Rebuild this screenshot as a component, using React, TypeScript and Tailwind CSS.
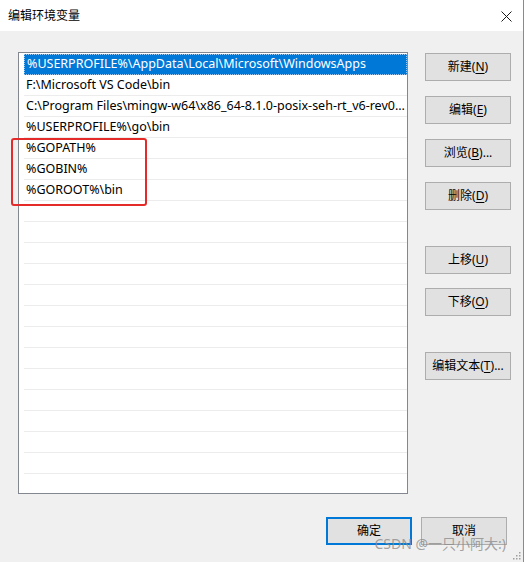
import React from "react";

const FONT = '"Noto Sans", "Noto Sans CJK SC", sans-serif';

const PATHS = [
  "%USERPROFILE%\\AppData\\Local\\Microsoft\\WindowsApps",
  "F:\\Microsoft VS Code\\bin",
  "C:\\Program Files\\mingw-w64\\x86_64-8.1.0-posix-seh-rt_v6-rev0\\mingw64\\bin",
  "%USERPROFILE%\\go\\bin",
  "%GOPATH%",
  "%GOBIN%",
  "%GOROOT%\\bin",
];

const EMPTY_ROWS = 14;

function WinButton({ label, hotkey, suffix = "", className = "" }: { label: string; hotkey?: string; suffix?: string; className?: string }) {
  return (
    <button
      className={`flex h-[28px] w-[86px] items-center justify-center border border-[#adadad] bg-[#e1e1e1] text-[12px] text-black ${className}`}
    >
      {label}
      {hotkey && (
        <>
          (<span className="underline underline-offset-2">{hotkey}</span>)
        </>
      )}
      {suffix}
    </button>
  );
}

export default function App() {
  return (
    <div className="flex h-[562px] w-[526px] bg-white" style={{ fontFamily: FONT }}>
      <div className="relative flex h-full w-[524px] flex-col border-r border-[#8a8a8a]">
        {/* title bar */}
        <div className="flex h-[31px] shrink-0 items-center justify-between bg-white pl-[8px] pr-[11px]">
          <span className="text-[12px] text-black">编辑环境变量</span>
          <svg width="11" height="11" viewBox="0 0 11 11" className="mt-[1px]">
            <path d="M0.5 0.5 L10.5 10.5 M10.5 0.5 L0.5 10.5" stroke="#1a1a1a" strokeWidth="1" />
          </svg>
        </div>

        {/* body */}
        <div className="flex flex-1 flex-col bg-[#f0f0f0] pl-[18px] pt-[21px]">
          <div className="flex">
            <div className="h-[442px] w-[390px] overflow-hidden border border-[#828790] bg-white pl-[5px] pt-[1px]">
              {PATHS.map((p, i) => (
                <div
                  key={p}
                  className={`flex h-[21px] items-center border-b px-[2px] text-[12.5px] ${
                    i === 0
                      ? "border border-dotted border-[#9cc8f0] bg-[#0078d7] text-white"
                      : "border-[#ececec] text-black"
                  }`}
                >
                  <span className="truncate">{p}</span>
                </div>
              ))}
              {Array.from({ length: EMPTY_ROWS }).map((_, i) => (
                <div key={i} className="h-[21px] border-b border-[#ececec]" />
              ))}
            </div>

            <div className="ml-[17px] flex flex-col pt-[1px]">
              <WinButton label="新建" hotkey="N" />
              <WinButton label="编辑" hotkey="E" className="mt-[15px]" />
              <WinButton label="浏览" hotkey="B" suffix="..." className="mt-[15px]" />
              <WinButton label="删除" hotkey="D" className="mt-[15px]" />
              <WinButton label="上移" hotkey="U" className="mt-[36px]" />
              <WinButton label="下移" hotkey="O" className="mt-[14px]" />
              <WinButton label="编辑文本" hotkey="T" suffix="..." className="mt-[36px]" />
            </div>
          </div>

          <div className="mt-[23px] flex justify-end gap-[9px] pr-[16px]">
            <button className="flex h-[28px] w-[86px] items-center justify-center border-2 border-[#0078d7] bg-[#e1e1e1] text-[12px] text-black">
              确定
            </button>
            <WinButton label="取消" />
          </div>
        </div>

        {/* red annotation */}
        <div className="pointer-events-none absolute left-[11px] top-[138px] h-[68px] w-[136px] rounded-[3px] border-2 border-[#e52a2a]" />

        {/* watermark */}
        <div className="pointer-events-none absolute right-[17px] top-[535px] text-[14px] leading-[18px] text-[#8c8c8c]/80">
          CSDN @一只小阿大:)
        </div>

        {/* resize grip */}
        <svg className="absolute bottom-[2px] right-[2px]" width="8" height="8" viewBox="0 0 8 8">
          <rect x="6" y="0" width="1.5" height="1.5" fill="#a0a0a0" />
          <rect x="3" y="3" width="1.5" height="1.5" fill="#a0a0a0" />
          <rect x="6" y="3" width="1.5" height="1.5" fill="#a0a0a0" />
          <rect x="0" y="6" width="1.5" height="1.5" fill="#a0a0a0" />
          <rect x="3" y="6" width="1.5" height="1.5" fill="#a0a0a0" />
          <rect x="6" y="6" width="1.5" height="1.5" fill="#a0a0a0" />
        </svg>
      </div>
    </div>
  );
}
